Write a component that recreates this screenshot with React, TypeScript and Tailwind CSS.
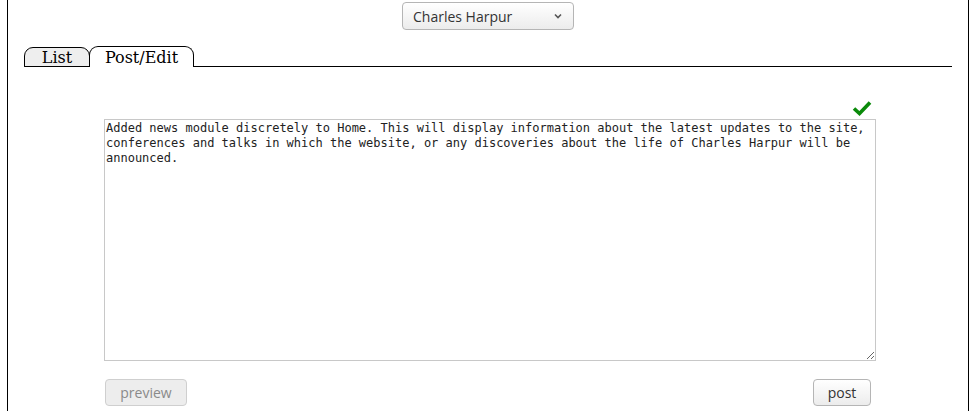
import React from "react";

export default function App() {
  const text =
    "Added news module discretely to Home. This will display information about the latest updates to the site, conferences and talks in which the website, or any discoveries about the life of Charles Harpur will be announced.";
  return (
    <div className="w-[978px] h-[411px] bg-white overflow-hidden">
      <div className="ml-[7px] w-[962px] h-[411px] border-x border-black">
        <div className="flex justify-center pt-[2px]">
          <div
            className="w-[172px] h-[28px] rounded-[4px] border border-[#b5b5b5] bg-gradient-to-b from-white to-[#ececec] flex items-center justify-between pl-[10px] pr-[10px] text-[14px] text-[#333]"
            style={{ fontFamily: '"Open Sans", "Noto Sans", sans-serif' }}
          >
            <span>Charles Harpur</span>
            <svg width="10" height="10" viewBox="0 0 10 10">
              <path d="M2 3.5 L5 6.5 L8 3.5" fill="none" stroke="#555" strokeWidth="1.6" />
            </svg>
          </div>
        </div>
        <div
          className="mx-[16px] mt-[16px] flex items-end border-b border-black h-[21px] text-[16px] leading-none text-black"
          style={{ fontFamily: '"DejaVu Serif", "Liberation Serif", serif' }}
        >
          <div className="w-[66px] h-[20px] mb-[-1px] bg-[#eeeeee] border border-black rounded-t-[9px] flex items-center justify-center pt-[1px]">
            List
          </div>
          <div className="w-[105px] h-[21px] mb-[-1px] bg-white border border-b-0 border-black rounded-t-[9px] flex items-center justify-center ml-[-1px] pt-[2px]">
            Post/Edit
          </div>
        </div>
        <div className="w-[772px] ml-[96px] mt-[33px]">
          <div className="flex justify-end pr-[4px] h-[19px]">
            <svg width="20" height="16" viewBox="0 0 20 16">
              <path d="M2 8.5 L7.5 13.5 L18 2.5" fill="none" stroke="#0a8a0a" strokeWidth="3.6" strokeLinejoin="miter" />
            </svg>
          </div>
          <textarea
            defaultValue={text}
            className="block w-[772px] h-[242px] border border-[#c8c8c8] px-[1px] py-[1px] text-[12px] leading-[15px] text-[#222] outline-none resize"
            style={{ fontFamily: '"DejaVu Sans Mono", "Liberation Mono", monospace' }}
          />
          <div
            className="flex justify-between mt-[18px] pl-[1px] pr-[5px]"
            style={{ fontFamily: '"Open Sans", "Noto Sans", sans-serif' }}
          >
            <button
              disabled
              className="w-[82px] h-[27px] rounded-[4px] border border-[#cfcfcf] bg-[#ededed] text-[14px] text-[#8a8a8a]"
            >
              preview
            </button>
            <button className="w-[58px] h-[27px] rounded-[4px] border border-[#b5b5b5] bg-gradient-to-b from-white to-[#ececec] text-[14px] text-[#333]">
              post
            </button>
          </div>
        </div>
      </div>
    </div>
  );
}
